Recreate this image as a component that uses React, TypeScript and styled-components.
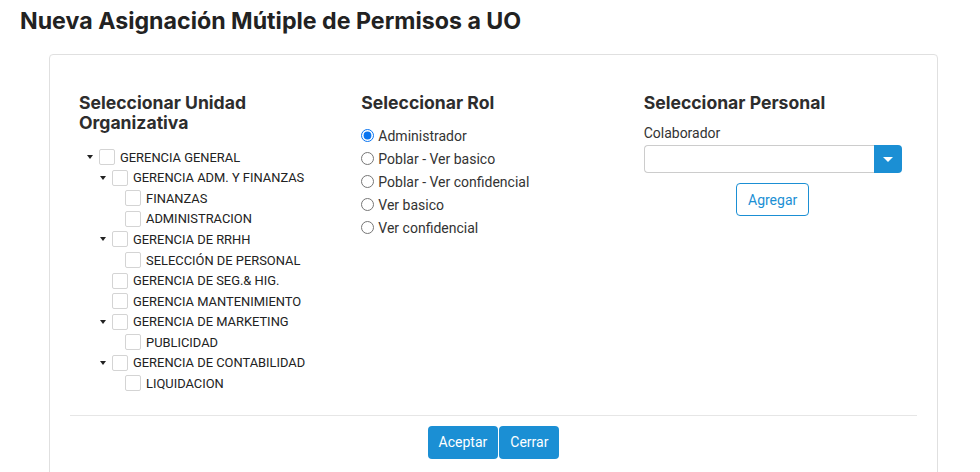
import * as React from 'react';
import styled, { createGlobalStyle } from 'styled-components';

type Unit = {
  name: string;
  children?: Unit[];
};

const units: Unit[] = [
  {
    name: 'GERENCIA GENERAL',
    children: [
      { name: 'GERENCIA ADM. Y FINANZAS', children: [{ name: 'FINANZAS' }, { name: 'ADMINISTRACION' }] },
      { name: 'GERENCIA DE RRHH', children: [{ name: 'SELECCIÓN DE PERSONAL' }] },
      { name: 'GERENCIA DE SEG.& HIG.' },
      { name: 'GERENCIA MANTENIMIENTO' },
      { name: 'GERENCIA DE MARKETING', children: [{ name: 'PUBLICIDAD' }] },
      { name: 'GERENCIA DE CONTABILIDAD', children: [{ name: 'LIQUIDACION' }] },
    ],
  },
];

const roles = ['Administrador', 'Poblar - Ver basico', 'Poblar - Ver confidencial', 'Ver basico', 'Ver confidencial'];

const BLUE = '#1b8fd4';

const GlobalStyle = createGlobalStyle`
  body {
    margin: 0;
    background: #fff;
    font-family: Roboto, "Liberation Sans", sans-serif;
    color: #333;
  }
`;

const Page = styled.div`
  padding: 8px 0 0 20px;
  width: 918px;
`;

const Title = styled.h1`
  margin: 0 0 20px;
  font-family: Inter, "Liberation Sans", sans-serif;
  font-size: 23.2px;
  line-height: 26px;
  font-weight: 700;
  color: #222;
`;

const Card = styled.div`
  margin-left: 29px;
  border: 1px solid #e0e0e0;
  border-radius: 4px;
  padding: 38px 20px 40px;
`;

const Columns = styled.div`
  display: grid;
  grid-template-columns: repeat(3, 1fr);
`;

const Column = styled.div`
  padding: 0 10px 0 9px;
`;

const Heading = styled.h3`
  margin: 0;
  font-family: Inter, "Liberation Sans", sans-serif;
  font-size: 17.6px;
  line-height: 20px;
  font-weight: 700;
  color: #2d2d2d;
  max-width: 240px;
`;

const Tree = styled.div`
  margin-top: 14px;
`;

const TreeRow = styled.div<{ $level: number }>`
  display: flex;
  align-items: center;
  height: 20.55px;
  padding-left: ${p => 8 + p.$level * 13}px;
  font-size: 12.9px;
  color: #222;
`;

const CaretSlot = styled.span`
  width: 12px;
  display: flex;
  align-items: center;
`;

const Caret = styled.span`
  width: 0;
  height: 0;
  border-left: 3.5px solid transparent;
  border-right: 3.5px solid transparent;
  border-top: 4px solid #222;
`;

const Box = styled.span`
  width: 16px;
  height: 16px;
  border: 1px solid #d4d4d4;
  border-radius: 2px;
  box-sizing: border-box;
  margin-right: 5px;
  background: #fff;
`;

const RadioList = styled.div`
  margin-top: 11px;
`;

const RadioRow = styled.label`
  display: flex;
  align-items: center;
  height: 23px;
  font-size: 14px;
  color: #333;

  input {
    margin: 0 4px 0 0;
    width: 13px;
    height: 13px;
    accent-color: #0a75f0;
  }
`;

const Label = styled.div`
  margin-top: 10px;
  font-size: 14px;
  line-height: 20px;
  color: #333;
`;

const SelectGroup = styled.div`
  display: flex;
  margin-top: 2px;
  width: 258px;
`;

const SelectInput = styled.div`
  flex: 1;
  height: 28px;
  border: 1px solid #ccc;
  border-right: none;
  border-radius: 4px 0 0 4px;
  box-sizing: border-box;
`;

const SelectButton = styled.button`
  width: 28px;
  height: 28px;
  border: none;
  border-radius: 0 4px 4px 0;
  background: ${BLUE};
  display: flex;
  align-items: center;
  justify-content: center;
  padding: 0;
`;

const WhiteCaret = styled(Caret)`
  border-top-color: #fff;
  border-left-width: 5px;
  border-right-width: 5px;
  border-top-width: 5px;
`;

const AddWrap = styled.div`
  width: 258px;
  display: flex;
  justify-content: center;
  margin-top: 10px;
`;

const OutlineButton = styled.button`
  height: 33px;
  padding: 0 11px;
  border: 1px solid ${BLUE};
  border-radius: 4px;
  background: #fff;
  color: ${BLUE};
  font-family: Roboto, "Liberation Sans", sans-serif;
  font-size: 14px;
`;

const Divider = styled.hr`
  margin: 21px 0 10px;
  border: none;
  border-top: 1px solid #e6e6e6;
`;

const Footer = styled.div`
  display: flex;
  justify-content: center;
`;

const SolidButton = styled.button<{ $first?: boolean }>`
  height: 33px;
  padding: 0 11px;
  border: none;
  border-radius: 4px;
  background: ${BLUE};
  color: #fff;
  font-family: Roboto, "Liberation Sans", sans-serif;
  font-size: 14px;
  margin-left: ${p => (p.$first ? 0 : 1)}px;
`;

function TreeNode({ unit, level }: { unit: Unit; level: number }) {
  return (
    <>
      <TreeRow $level={level}>
        <CaretSlot>{unit.children && <Caret />}</CaretSlot>
        <Box />
        {unit.name}
      </TreeRow>
      {unit.children?.map(child => (
        <TreeNode key={child.name} unit={child} level={level + 1} />
      ))}
    </>
  );
}

export default function App() {
  const [role, setRole] = React.useState(roles[0]);

  return (
    <>
      <GlobalStyle />
      <Page>
        <Title>Nueva Asignación Mútiple de Permisos a UO</Title>
        <Card>
          <Columns>
            <Column>
              <Heading>Seleccionar Unidad Organizativa</Heading>
              <Tree>
                {units.map(u => (
                  <TreeNode key={u.name} unit={u} level={0} />
                ))}
              </Tree>
            </Column>
            <Column>
              <Heading>Seleccionar Rol</Heading>
              <RadioList>
                {roles.map(r => (
                  <RadioRow key={r}>
                    <input type="radio" name="rol" checked={role === r} onChange={() => setRole(r)} />
                    {r}
                  </RadioRow>
                ))}
              </RadioList>
            </Column>
            <Column>
              <Heading>Seleccionar Personal</Heading>
              <Label>Colaborador</Label>
              <SelectGroup>
                <SelectInput />
                <SelectButton>
                  <WhiteCaret />
                </SelectButton>
              </SelectGroup>
              <AddWrap>
                <OutlineButton>Agregar</OutlineButton>
              </AddWrap>
            </Column>
          </Columns>
          <Divider />
          <Footer>
            <SolidButton $first>Aceptar</SolidButton>
            <SolidButton>Cerrar</SolidButton>
          </Footer>
        </Card>
      </Page>
    </>
  );
}
